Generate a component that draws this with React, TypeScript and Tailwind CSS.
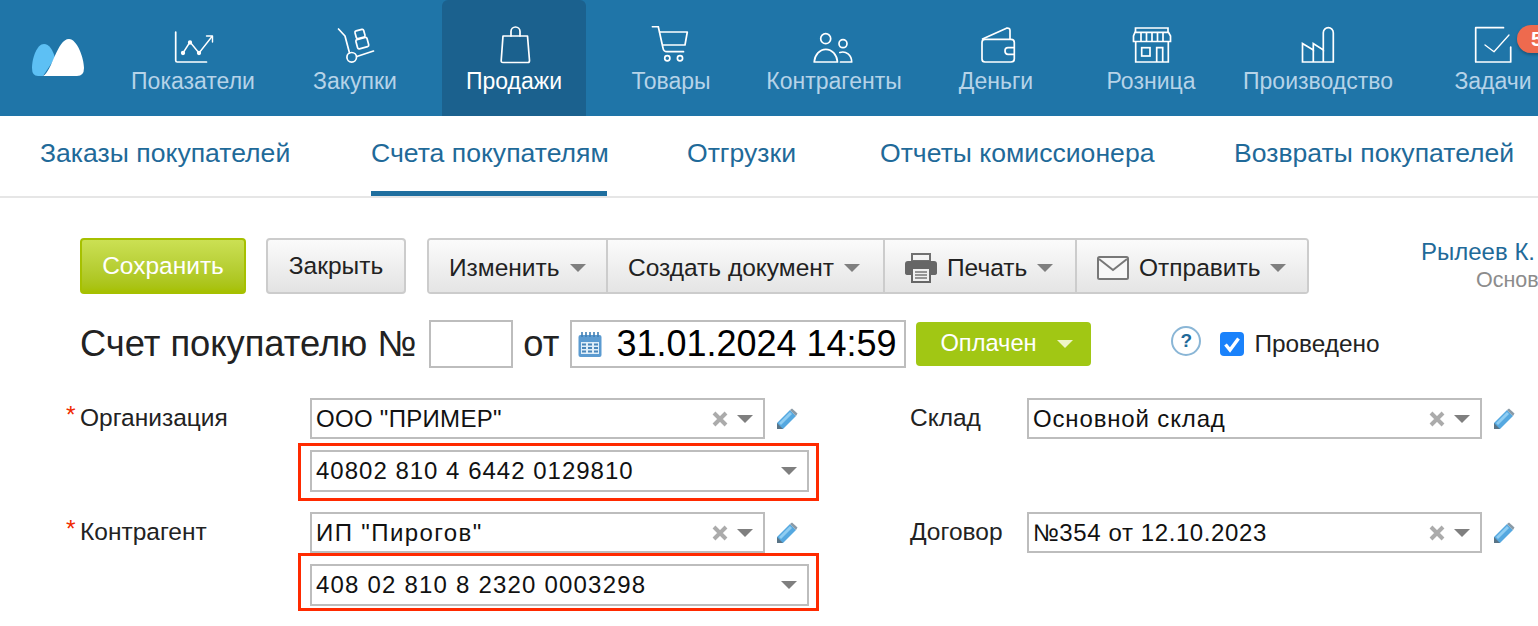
import React from "react";

const navItems = [
  { label: "Показатели", width: "w-[162px]", vb: "171 26 44 38", icon: "chart" },
  { label: "Закупки", width: "w-[168px] pr-[6px]", vb: "333 26 44 38", icon: "trolley" },
  { label: "Продажи", width: "w-[144px]", vb: "492 26 44 38", icon: "bag", active: true },
  { label: "Товары", width: "w-[170px]", vb: "649 26 44 38", icon: "cart" },
  { label: "Контрагенты", width: "w-[156px]", vb: "812 26 44 38", icon: "people" },
  { label: "Деньги", width: "w-[168px]", vb: "974 26 44 38", icon: "wallet" },
  { label: "Розница", width: "w-[142px]", vb: "1129 26 44 38", icon: "store" },
  { label: "Производство", width: "w-[192px]", vb: "1296 26 44 38", icon: "factory" },
  { label: "Задачи", width: "w-[158px]", vb: "1471 26 44 38", icon: "tasks" },
];

const subTabs = [
  { label: "Заказы покупателей", width: "w-[251px]" },
  { label: "Счета покупателям", width: "w-[236px]", active: true },
  { label: "Отгрузки", width: "w-[113px]" },
  { label: "Отчеты комиссионера", width: "w-[274px]" },
  { label: "Возвраты покупателей", width: "w-[280px]" },
];

function NavIcon({ name, vb }: { name: string; vb: string }) {
  return (
    <svg viewBox={vb} className="w-[44px] h-[38px]" fill="none" stroke="white" strokeWidth="1.7" strokeLinecap="round" strokeLinejoin="round">
      {name === "chart" && (
        <>
          <path d="M175.7 32V60.5Q175.7 62 177.2 62H206.5" />
          <path d="M183 53L190 42L199 53L212 36.5" strokeWidth="1.4" />
          <path d="M206.5 36H212.5V42" strokeWidth="1.4" />
          <circle cx="183" cy="53" r="1.3" fill="white" />
          <circle cx="190" cy="42.5" r="1.3" fill="white" />
          <circle cx="199" cy="53" r="1.3" fill="white" />
        </>
      )}
      {name === "trolley" && (
        <>
          <path d="M338.5 29L345 36L349.5 53" />
          <circle cx="351.7" cy="57.3" r="4.8" />
          <path d="M356.8 56.5L373.5 51" />
          <rect x="355.5" y="30" width="9" height="8" rx="1.5" transform="rotate(-15 360 34)" />
          <rect x="356.5" y="38.5" width="11.5" height="9.5" rx="1.5" transform="rotate(-15 362 43)" />
        </>
      )}
      {name === "bag" && (
        <>
          <path d="M503 36H527.5L529.5 60.5Q529.5 62.5 528 62.5H503Q501 62.5 501.2 60.5Z" />
          <path d="M511 36V31.5a4.5 4.5 0 0 1 9 0V36" />
        </>
      )}
      {name === "cart" && (
        <>
          <path d="M652.5 26.7H658.3L663 48Q663.5 51.7 667 51.7H683.5" />
          <path d="M659.7 32H687.3L685 45H662.7" />
          <circle cx="667.3" cy="58.3" r="2.6" />
          <circle cx="680" cy="58.3" r="2.6" />
        </>
      )}
      {name === "people" && (
        <>
          <circle cx="825.7" cy="38.7" r="5" />
          <path d="M814.2 62A11.7 14 0 0 1 837.5 62Z" />
          <circle cx="843" cy="43.7" r="4" />
          <path d="M839.8 52.5C846 50.5 851.7 55 851.7 62H840.5" />
        </>
      )}
      {name === "wallet" && (
        <>
          <path d="M982 42.5Q982 39.3 985 39.3H1011Q1014.3 39.3 1014.3 42.5V59Q1014.3 62 1011 62H985Q982 62 982 59Z" />
          <path d="M982.5 39L1006.5 28.2Q1010 27.5 1010 30.5V39" />
          <path d="M1014 47.7H1008Q1005 47.7 1005 51Q1005 54.3 1008 54.3H1014" />
        </>
      )}
      {name === "store" && (
        <g strokeLinecap="butt" strokeLinejoin="miter">
          <path d="M1135.5 32.3V28H1168V32.3" />
          <path d="M1135 32.3H1168.5L1170.5 36V41.5H1133.5V36Z" />
          <path d="M1141 32.5V41M1146.5 32.5V41M1152 32.5V41M1157.5 32.5V41M1163 32.5V41" />
          <path d="M1135.7 41.5V62H1168.3V41.5" />
          <rect x="1141.7" y="47.7" width="8.3" height="8.3" />
          <path d="M1156.7 62V47.7H1162.7V62" />
        </g>
      )}
      {name === "factory" && (
        <g strokeLinecap="butt" strokeLinejoin="miter">
          <path d="M1302.5 62V43.5L1313.3 50V43.5L1323.3 50V32.7a5 5 0 0 1 10 0V62Z" />
          <path d="M1313.3 50V62M1323.3 50V62" />
        </g>
      )}
      {name === "tasks" && (
        <>
          <path d="M1503.5 27.7H1475.7V62H1510.7V47" />
          <path d="M1485 45L1494 51.7L1509 35" strokeWidth="1.3" />
        </>
      )}
    </svg>
  );
}

function Caret({ light = false }: { light?: boolean }) {
  return (
    <svg viewBox="0 0 16 8" className="w-[16px] h-[8px] shrink-0">
      <polygon points="0,0 16,0 8,8" fill={light ? "#eef5c8" : "#7f7f7f"} />
    </svg>
  );
}

function Pencil() {
  return (
    <svg viewBox="0 0 22 22" className="w-[22px] h-[22px] shrink-0">
      <polygon points="1,21 1,15 14,2 20,8 7,21" fill="#55a8e0" />
      <polygon points="14,2 16,0.5 21.5,5.5 20,8" fill="#8a9aa6" />
      <polygon points="3,15 14,4 16,6 5,17" fill="#8fcdf2" />
      <polygon points="1,21 1,15 7,21" fill="#5a7486" />
    </svg>
  );
}

function Cross() {
  return (
    <svg viewBox="0 0 16 16" className="w-[16px] h-[16px] shrink-0">
      <path d="M2 2L14 14M14 2L2 14" stroke="#ababab" strokeWidth="4" />
    </svg>
  );
}

function Select({ value, spacing, wide = false, clear = true }: { value: string; spacing: string; wide?: boolean; clear?: boolean }) {
  return (
    <div className={`${wide ? "w-[499px] h-[42px]" : "w-[455px] h-[41px]"} border-2 border-[#bdbdbd] bg-white flex items-center pl-[4px] shrink-0`}>
      <span className={`flex-1 text-[24px] text-[#111] whitespace-nowrap ${spacing}`}>{value}</span>
      {clear && <Cross />}
      <span className={clear ? "ml-[9px] mr-[10px]" : "mr-[10px]"}>
        <Caret />
      </span>
    </div>
  );
}

function Label({ text, required = false }: { text: string; required?: boolean }) {
  return (
    <div className="text-[24.5px] leading-[40px] text-[#222] flex relative">
      {required && <span className="absolute left-[-14px] top-[-3px] text-[#f02a00]">*</span>}
      {text}
    </div>
  );
}

function RedBox({ value, spacing, padding }: { value: string; spacing: string; padding: string }) {
  return (
    <div className={`ml-[-12px] w-[521px] border-[3px] border-[#ff2a00] pl-[9px] ${padding}`}>
      <Select value={value} spacing={spacing} wide clear={false} />
    </div>
  );
}

function Button({ children, className = "" }: { children: React.ReactNode; className?: string }) {
  return (
    <div className={`h-[56px] flex items-center gap-[10px] text-[24.5px] text-[#222] bg-gradient-to-b from-[#fbfbfb] to-[#e3e3e3] shrink-0 ${className}`}>
      {children}
    </div>
  );
}

export default function App() {
  return (
    <div className="w-[1538px] h-[626px] overflow-hidden bg-white text-[#222] font-['Liberation_Sans',Arial,sans-serif]">
      <div className="h-[116px] bg-[#1f75a8] flex relative">
        <div className="w-[112px] shrink-0 pl-[32px] pt-[39px]">
          <svg viewBox="32 39 52 38" className="w-[52px] h-[38px]">
            <path d="M32 68C32 58 37 44 44 44C49 44 53 50 55 58L43 76H38Q32 76 32 68Z" fill="#5dc0f4" />
            <path d="M43 76C52 72 57 39 69 39C77 39 84 58 84 68Q84 76 77 76Z" fill="white" />
          </svg>
        </div>
        {navItems.map((item) => (
          <div
            key={item.label}
            className={`${item.width} shrink-0 flex flex-col items-center pt-[26px] ${item.active ? "bg-[#1b618e] rounded-t-[6px]" : ""}`}
          >
            <NavIcon name={item.icon} vb={item.vb} />
            <span className={`text-[23px] leading-[30px] mt-[2px] whitespace-nowrap ${item.active ? "text-white font-medium" : "text-[#b6d3e8]"}`}>
              {item.label}
            </span>
          </div>
        ))}
        <div className="absolute left-[1517px] top-[25px] w-[40px] h-[28px] rounded-l-[14px] bg-[#ee6a4e] shadow-[0_2px_3px_rgba(0,0,0,0.25)] pl-[14px] text-[21px] leading-[28px] font-bold text-white">
          5
        </div>
      </div>

      <div className="h-[82px] border-b-2 border-[#e6e6e6] flex gap-[80px] pl-[40px]">
        {subTabs.map((tab) => (
          <div
            key={tab.label}
            className={`${tab.width} shrink-0 h-[80px] pt-[20px] text-[26.6px] leading-[34px] text-[#1f6a99] whitespace-nowrap ${tab.active ? "border-b-[5px] border-[#1f6f9f]" : ""}`}
          >
            {tab.label}
          </div>
        ))}
      </div>

      <div className="pt-[40px] pl-[80px] flex">
        <div className="w-[166px] h-[56px] shrink-0 rounded-[4px] border-2 border-[#a6c000] bg-gradient-to-b from-[#cbe053] to-[#a6c000] flex items-center justify-center text-[24.5px] text-white">
          Сохранить
        </div>
        <Button className="ml-[20px] w-[140px] justify-center rounded-[4px] border-2 border-[#cccccc]">Закрыть</Button>
        <div className="ml-[21px] flex shrink-0 rounded-[4px] border-2 border-[#cccccc] h-[56px] overflow-hidden">
          <Button className="w-[179px] h-[52px] pl-[20px] border-r-2 border-[#cccccc]">
            Изменить <Caret />
          </Button>
          <Button className="w-[277px] h-[52px] pl-[20px] border-r-2 border-[#cccccc]">
            Создать документ <Caret />
          </Button>
          <Button className="w-[192px] h-[52px] pl-[20px] border-r-2 border-[#cccccc]">
            <svg viewBox="0 0 32 30" className="w-[32px] h-[30px] shrink-0">
              <path d="M7 1H25V8H7Z" fill="none" stroke="#707070" strokeWidth="2" />
              <path d="M3 8H29Q32 8 32 11V20Q32 22 29 22H3Q0 22 0 20V11Q0 8 3 8Z" fill="#666666" />
              <rect x="7" y="15" width="18" height="14" fill="#f0f0f0" stroke="#666666" strokeWidth="2" />
              <path d="M10 19H22M10 22H22M10 25H22" stroke="#777777" strokeWidth="1.5" />
            </svg>
            Печать <Caret />
          </Button>
          <Button className="w-[230px] h-[52px] pl-[20px]">
            <svg viewBox="0 0 32 24" className="w-[32px] h-[24px] shrink-0">
              <rect x="1" y="1" width="30" height="22" rx="1.5" fill="#f7f7f7" stroke="#777777" strokeWidth="2" />
              <path d="M2 3L16 14L30 3" fill="none" stroke="#777777" strokeWidth="2" />
            </svg>
            Отправить <Caret />
          </Button>
        </div>
        <div className="ml-[112px] shrink-0 w-[200px]">
          <div className="text-[24px] leading-[28px] text-[#1f6a99]">Рылеев К.</div>
          <div className="ml-[55px] text-[21.5px] leading-[28px] text-[#8c8c8c]">Основной</div>
        </div>
      </div>

      <div className="mt-[26px] pl-[80px] flex items-center h-[48px]">
        <span className="text-[36.3px] text-[#222] whitespace-nowrap">Счет покупателю №</span>
        <div className="ml-[13px] w-[84px] h-[48px] border-2 border-[#bdbdbd]" />
        <span className="ml-[10px] text-[36.3px] text-[#222]">от</span>
        <div className="ml-[11px] w-[336px] h-[48px] border-2 border-[#bdbdbd] flex items-center pl-[6px]">
          <svg viewBox="0 0 24 25" className="w-[24px] h-[25px] shrink-0">
            <rect x="0.5" y="3" width="23" height="22" rx="2" fill="#5b9bd1" />
            <path d="M4 0V5M8 0V5M12 0V5M16 0V5M20 0V5" stroke="#3f7fb5" strokeWidth="1.6" />
            <rect x="3" y="10" width="18" height="12" fill="#dfeef9" />
            <path d="M4 12.5H8M10 12.5H14M16 12.5H20M4 16H8M10 16H14M16 16H20M4 19.5H8M10 19.5H14M16 19.5H20" stroke="#4a86ba" strokeWidth="2.2" />
          </svg>
          <span className="ml-[14px] text-[36px] text-black whitespace-nowrap">31.01.2024 14:59</span>
        </div>
        <div className="ml-[10px] w-[175px] h-[44px] rounded-[4px] bg-[#a1c714] flex items-center pl-[24px] gap-[20px] text-[23.7px] text-white">
          Оплачен <Caret light />
        </div>
        <div className="ml-[80px] mt-[-6px] w-[30px] h-[30px] rounded-full border-2 border-[#8ab6d6] flex items-center justify-center text-[19px] font-bold text-[#1f6a99]">
          ?
        </div>
        <div className="ml-[19px] w-[24px] h-[24px] rounded-[4px] bg-[#1a82fb] flex items-center justify-center">
          <svg viewBox="0 0 24 24" className="w-[24px] h-[24px]">
            <path d="M5.5 12.5L10 18L18.5 6.5" fill="none" stroke="white" strokeWidth="3.4" />
          </svg>
        </div>
        <span className="ml-[10px] text-[24.4px] text-[#222]">Проведено</span>
      </div>

      <div className="mt-[30px] pl-[80px] flex">
        <div className="w-[830px] shrink-0">
          <div className="flex">
            <div className="w-[230px]">
              <Label text="Организация" required />
            </div>
            <div className="flex flex-col">
              <div className="flex items-center gap-[11px]">
                <Select value={'ООО "ПРИМЕР"'} spacing="tracking-[0.3px]" />
                <Pencil />
              </div>
              <div className="mt-[4px]">
                <RedBox value="40802 810 4 6442 0129810" spacing="tracking-[1px]" padding="pt-[4px] pb-[6px]" />
              </div>
            </div>
          </div>
          <div className="flex mt-[11px]">
            <div className="w-[230px]">
              <Label text="Контрагент" required />
            </div>
            <div className="flex flex-col">
              <div className="flex items-center gap-[11px]">
                <Select value={'ИП "Пирогов"'} spacing="tracking-[1.4px]" />
                <Pencil />
              </div>
              <RedBox value="408 02 810 8 2320 0003298" spacing="tracking-[1.2px]" padding="pt-[8px] pb-[2px]" />
            </div>
          </div>
        </div>
        <div className="flex flex-col">
          <div className="flex">
            <div className="w-[117px]">
              <Label text="Склад" />
            </div>
            <div className="flex items-center gap-[11px]">
              <Select value="Основной склад" spacing="tracking-[0.85px]" />
              <Pencil />
            </div>
          </div>
          <div className="flex mt-[73px]">
            <div className="w-[117px]">
              <Label text="Договор" />
            </div>
            <div className="flex items-center gap-[11px]">
              <Select value="№354 от 12.10.2023" spacing="tracking-[0.6px]" />
              <Pencil />
            </div>
          </div>
        </div>
      </div>
    </div>
  );
}
